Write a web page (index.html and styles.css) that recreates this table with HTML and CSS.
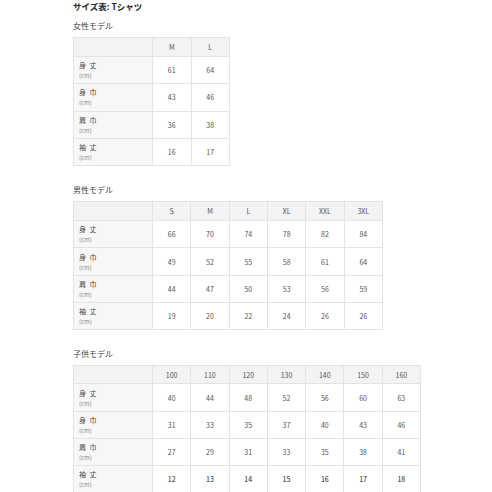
FILE: index.html
```html
<!DOCTYPE html>
<html lang="ja">
<head>
<meta charset="utf-8">
<link rel="stylesheet" href="styles.css">
</head>
<body>
<div class="page">
  <h1 class="title">サイズ表: Tシャツ</h1>

  <section class="block block-first">
    <h2 class="heading">女性モデル</h2>
    <table class="size w2">
      <colgroup><col class="c-label"><col class="c-val"><col class="c-val"></colgroup>
      <thead><tr><th class="corner"></th><th>M</th><th>L</th></tr></thead>
      <tbody>
        <tr><th class="lab">身 丈<span>(cm)</span></th><td>61</td><td>64</td></tr>
        <tr><th class="lab">身 巾<span>(cm)</span></th><td>43</td><td>46</td></tr>
        <tr><th class="lab">肩 巾<span>(cm)</span></th><td>36</td><td>38</td></tr>
        <tr><th class="lab">袖 丈<span>(cm)</span></th><td>16</td><td>17</td></tr>
      </tbody>
    </table>
  </section>

  <section class="block">
    <h2 class="heading">男性モデル</h2>
    <table class="size w6">
      <colgroup><col class="c-label"><col class="c-val"><col class="c-val"><col class="c-val"><col class="c-val"><col class="c-val"><col class="c-val"></colgroup>
      <thead><tr><th class="corner"></th><th>S</th><th>M</th><th>L</th><th>XL</th><th>XXL</th><th>3XL</th></tr></thead>
      <tbody>
        <tr><th class="lab">身 丈<span>(cm)</span></th><td>66</td><td>70</td><td>74</td><td>78</td><td>82</td><td>84</td></tr>
        <tr><th class="lab">身 巾<span>(cm)</span></th><td>49</td><td>52</td><td>55</td><td>58</td><td>61</td><td>64</td></tr>
        <tr><th class="lab">肩 巾<span>(cm)</span></th><td>44</td><td>47</td><td>50</td><td>53</td><td>56</td><td>59</td></tr>
        <tr><th class="lab">袖 丈<span>(cm)</span></th><td>19</td><td>20</td><td>22</td><td>24</td><td>26</td><td>26</td></tr>
      </tbody>
    </table>
  </section>

  <section class="block">
    <h2 class="heading">子供モデル</h2>
    <table class="size w7 kids">
      <colgroup><col class="c-label"><col class="c-val"><col class="c-val"><col class="c-val"><col class="c-val"><col class="c-val"><col class="c-val"><col class="c-val"></colgroup>
      <thead><tr><th class="corner"></th><th>100</th><th>110</th><th>120</th><th>130</th><th>140</th><th>150</th><th>160</th></tr></thead>
      <tbody>
        <tr><th class="lab">身 丈<span>(cm)</span></th><td>40</td><td>44</td><td>48</td><td>52</td><td>56</td><td>60</td><td>63</td></tr>
        <tr><th class="lab">身 巾<span>(cm)</span></th><td>31</td><td>33</td><td>35</td><td>37</td><td>40</td><td>43</td><td>46</td></tr>
        <tr><th class="lab">肩 巾<span>(cm)</span></th><td>27</td><td>29</td><td>31</td><td>33</td><td>35</td><td>38</td><td>41</td></tr>
        <tr class="dark"><th class="lab">袖 丈<span>(cm)</span></th><td>12</td><td>13</td><td>14</td><td>15</td><td>16</td><td>17</td><td>18</td></tr>
      </tbody>
    </table>
  </section>
</div>
</body>
</html>
```

FILE: styles.css
```css
html, body {
  margin: 0;
  padding: 0;
  background: #ffffff;
}

body {
  font-family: "Noto Sans CJK JP", "Noto Sans", "Liberation Sans", sans-serif;
  color: #444;
}

.page {
  padding: 1px 0 0 73px;
  display: flex;
  flex-direction: column;
  align-items: flex-start;
}

.title {
  margin: 0;
  font-size: 8.5px;
  line-height: 11px;
  font-weight: 700;
  color: #222;
}

.block {
  display: flex;
  flex-direction: column;
  align-items: flex-start;
  margin-top: 19px;
}

.block-first {
  margin-top: 9px;
}

.heading {
  margin: 0 0 6px 0;
  font-size: 8px;
  line-height: 10px;
  font-weight: 400;
  color: #444;
}

.size {
  border-collapse: collapse;
  table-layout: fixed;
  font-size: 7px;
  color: #555;
}

.w2 { width: 157px; }
.w6 { width: 310px; }
.w7 { width: 348px; }

.c-label { width: 79px; }

.size th,
.size td {
  border: 1px solid #e3e3e3;
  padding: 0;
  text-align: center;
  font-weight: 400;
}

.size thead th {
  background: #f3f3f3;
  height: 18px;
  color: #555;
}

.size td {
  height: 26.3px;
  background: #fff;
}

.size th.lab {
  background: #f7f7f7;
  text-align: left;
  padding: 1px 0 0 5px;
  font-size: 7px;
  line-height: 9px;
  word-spacing: 2px;
  color: #444;
  vertical-align: middle;
}

.size th.lab span {
  display: block;
  margin-top: 2px;
  font-size: 6px;
  line-height: 8px;
  color: #888;
}

.kids thead th {
  height: 17px;
}

.kids tr.dark td {
  color: #222;
}
```
